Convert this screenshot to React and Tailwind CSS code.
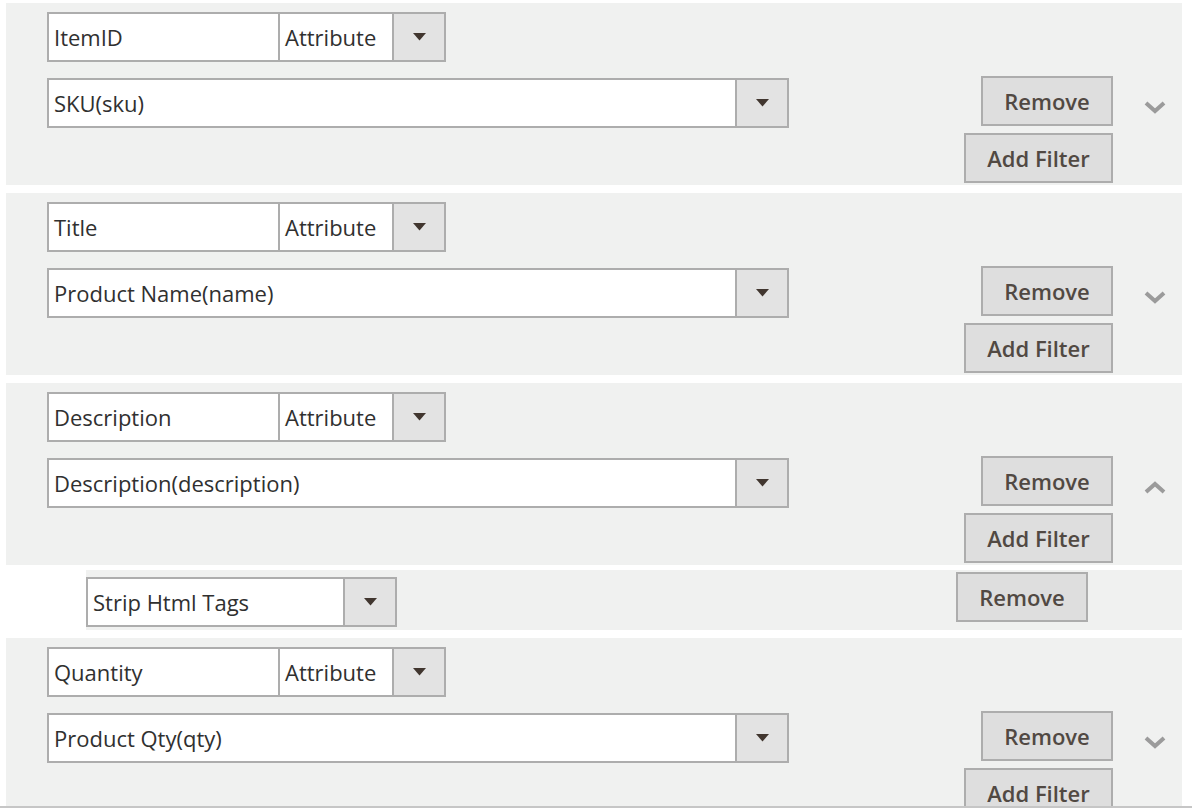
import React from "react";

const Tri = () => (
  <svg width="13" height="8" viewBox="0 0 13 8">
    <polygon points="0,0 13,0 6.5,7.5" fill="#41362f" />
  </svg>
);

const Chevron = ({ up }) => (
  <svg width="22" height="13" viewBox="0 0 22 13">
    <polyline
      points={up ? "2,11 11,3 20,11" : "2,2 11,10 20,2"}
      fill="none"
      stroke="#9b9b9b"
      strokeWidth="4"
    />
  </svg>
);

const Btn = ({ children, w }) => (
  <div
    className={`${w} h-[50px] border-2 border-[#adadad] bg-[#dedede] flex items-center justify-center text-[22px] font-semibold text-[#514943]`}
  >
    {children}
  </div>
);

const Select = ({ label, w }) => (
  <div className={`${w} h-[50px] border-2 border-[#adadad] bg-white flex`}>
    <div className="flex-1 flex items-center pl-[5px] pt-[1px] text-[22px] text-[#303030] whitespace-nowrap">
      {label}
    </div>
    <div className="w-[52px] border-l-2 border-[#adadad] bg-[#e3e3e3] flex items-center justify-center">
      <Tri />
    </div>
  </div>
);

const Panel = ({ name, attr, up }) => (
  <div className="flex h-[182px] shrink-0 bg-[#f0f1f0]">
    <div className="flex-1 flex flex-col pl-[41px] pt-[9px] gap-[16px]">
      <div className="flex h-[50px]">
        <div className="w-[231px] border-2 border-r-0 border-[#adadad] bg-white flex items-center pl-[5px] pt-[1px] text-[22px] text-[#303030]">
          {name}
        </div>
        <Select label="Attribute" w="w-[168px]" />
      </div>
      <Select label={attr} w="w-[742px]" />
    </div>
    <div className="flex flex-col items-end pt-[73px] gap-[7px]">
      <Btn w="w-[132px]">Remove</Btn>
      <Btn w="w-[149px]">Add Filter</Btn>
    </div>
    <div className="w-[69px] pl-[31px] pt-[98px]">
      <Chevron up={up} />
    </div>
  </div>
);

export default function App() {
  return (
    <div
      className="w-[1192px] h-[808px] overflow-hidden bg-white flex flex-col"
      style={{ fontFamily: '"Open Sans", "Noto Sans", sans-serif' }}
    >
      <div className="flex-1 overflow-hidden pl-[6px] pr-[10px] pt-[3px] flex flex-col">
        <Panel name="ItemID" attr="SKU(sku)" />
        <div className="h-[8px] shrink-0" />
        <Panel name="Title" attr="Product Name(name)" />
        <div className="h-[8px] shrink-0" />
        <Panel name="Description" attr="Description(description)" up />
        <div className="h-[5px] shrink-0" />
        <div className="ml-[80px] h-[60px] shrink-0 bg-[#f0f1f0] flex justify-between">
          <div className="pt-[7px]">
            <Select label="Strip Html Tags" w="w-[311px]" />
          </div>
          <div className="pt-[2px] pr-[94px]">
            <Btn w="w-[132px]">Remove</Btn>
          </div>
        </div>
        <div className="h-[8px] shrink-0" />
        <Panel name="Quantity" attr="Product Qty(qty)" />
      </div>
      <div className="h-[2px] bg-[#c6c6c6] shrink-0" />
    </div>
  );
}
